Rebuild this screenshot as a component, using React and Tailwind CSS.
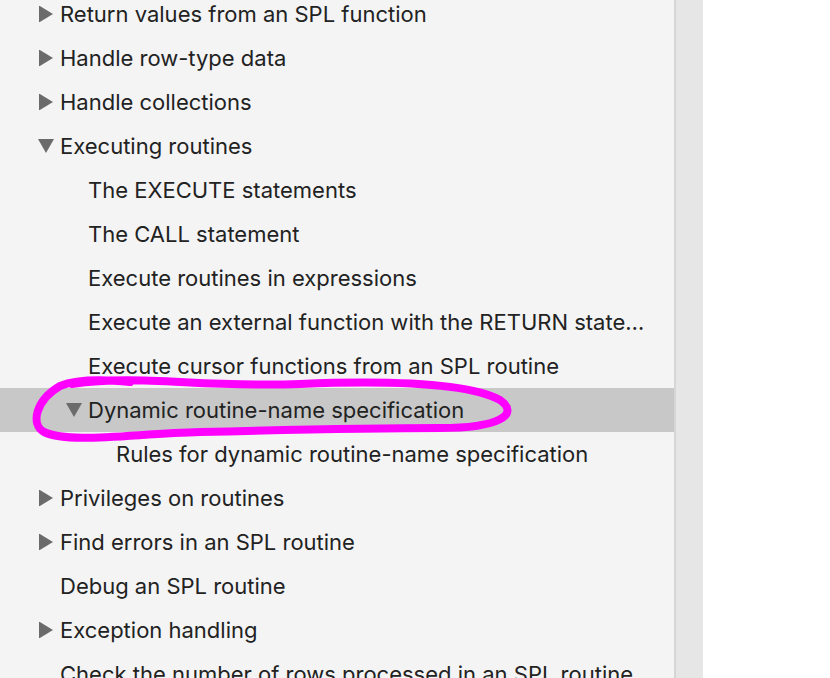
import React from "react";

const items = [
  { label: "Return values from an SPL function", level: 0, toggle: "closed" },
  { label: "Handle row-type data", level: 0, toggle: "closed" },
  { label: "Handle collections", level: 0, toggle: "closed" },
  { label: "Executing routines", level: 0, toggle: "open" },
  { label: "The EXECUTE statements", level: 1 },
  { label: "The CALL statement", level: 1 },
  { label: "Execute routines in expressions", level: 1 },
  { label: "Execute an external function with the RETURN state…", level: 1 },
  { label: "Execute cursor functions from an SPL routine", level: 1 },
  { label: "Dynamic routine-name specification", level: 1, toggle: "open", selected: true },
  { label: "Rules for dynamic routine-name specification", level: 2 },
  { label: "Privileges on routines", level: 0, toggle: "closed" },
  { label: "Find errors in an SPL routine", level: 0, toggle: "closed" },
  { label: "Debug an SPL routine", level: 0 },
  { label: "Exception handling", level: 0, toggle: "closed" },
  { label: "Check the number of rows processed in an SPL routine", level: 0 },
];

const indent = ["pl-[60px]", "pl-[88px]", "pl-[116px]"];

function Caret({ open }) {
  if (open) {
    return (
      <svg width="16" height="14" viewBox="0 0 16 14" className="absolute left-[-22px] top-1/2 -translate-y-1/2">
        <path d="M0 0 L16 0 L8 14 Z" fill="#6b6b6b" />
      </svg>
    );
  }
  return (
    <svg width="14" height="17" viewBox="0 0 14 17" className="absolute left-[-21px] top-1/2 -translate-y-1/2">
      <path d="M0 0 L14 8.5 L0 17 Z" fill="#6b6b6b" />
    </svg>
  );
}

function Row({ item }) {
  return (
    <div className={`h-[44px] flex ${indent[item.level]} ${item.selected ? "bg-[#c8c8c8]" : ""}`}>
      <div className="relative h-full flex items-center">
        {item.toggle && <Caret open={item.toggle === "open"} />}
        <span className="whitespace-nowrap leading-none">{item.label}</span>
      </div>
    </div>
  );
}

export default function App() {
  return (
    <div className="w-[830px] h-[678px] overflow-hidden flex bg-white" style={{ fontFamily: "Inter, 'Noto Sans', sans-serif" }}>
      <div className="relative w-[674px] h-full bg-[#f4f4f4] text-[22px] text-[#222222] overflow-hidden">
        <div className="-mt-2">
          {items.map((item) => (
            <Row key={item.label} item={item} />
          ))}
        </div>
        <svg className="absolute left-0 top-0" width="674" height="678" viewBox="0 0 674 678" fill="none">
          <path
            d="M72 384 C 140 374, 200 388, 300 384 C 400 380, 470 384, 500 400 C 520 414, 500 428, 440 428 C 360 428, 280 430, 200 432 C 130 434, 70 444, 44 432 C 30 424, 36 400, 60 386 C 80 378, 110 380, 130 382"
            stroke="#ff00ff"
            strokeWidth="8"
            strokeLinecap="round"
            strokeLinejoin="round"
          />
        </svg>
      </div>
      <div className="w-[2px] h-full bg-[#d6d6d6]" />
      <div className="w-[27px] h-full bg-[#e6e6e6]" />
      <div className="flex-1 h-full bg-white" />
    </div>
  );
}
